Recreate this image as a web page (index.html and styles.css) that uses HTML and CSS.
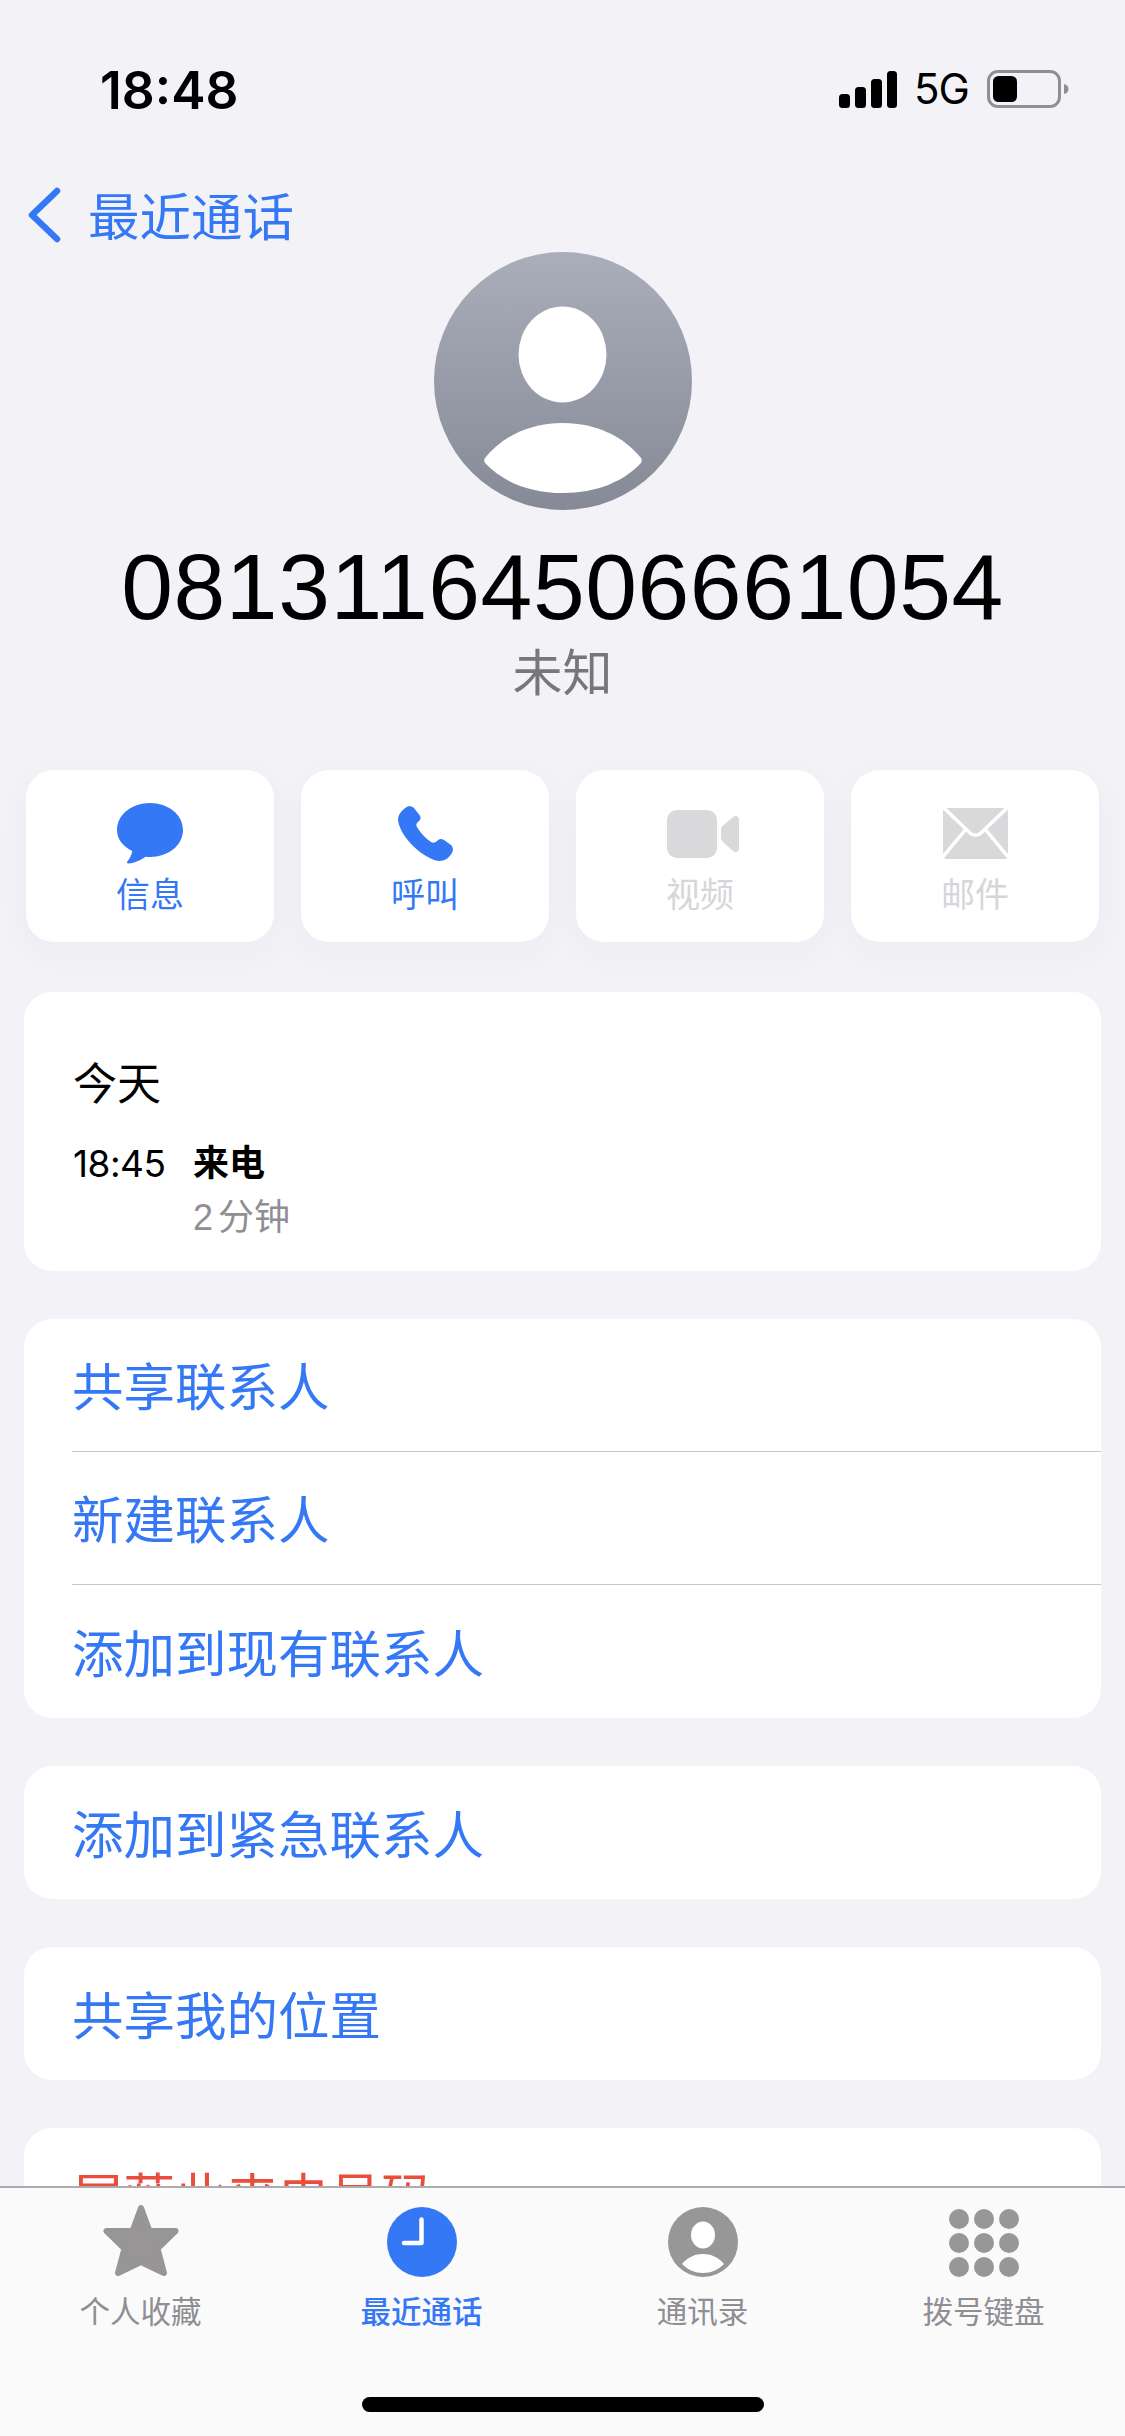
FILE: index.html
```html
<!DOCTYPE html>
<html lang="zh-CN">
<head>
<meta charset="utf-8">
<title>最近通话</title>
<link rel="stylesheet" href="styles.css">
</head>
<body>
<div class="screen">
  <header class="status">
    <span class="time">18:48</span>
    <div class="status-right">
      <svg class="signal" viewBox="0 0 58 37"><rect x="0" y="23" width="11" height="14" rx="3.5"/><rect x="16" y="16" width="11" height="21" rx="3.5"/><rect x="32" y="8" width="11" height="29" rx="3.5"/><rect x="48" y="0" width="10" height="37" rx="3.5"/></svg>
      <span class="net">5G</span>
      <svg class="battery" viewBox="0 0 82 38"><rect x="1.5" y="1.5" width="71" height="35" rx="9.5" fill="none" stroke="#8e8e93" stroke-width="3"/><rect x="6" y="6" width="24" height="26" rx="5.5" fill="#000"/><path d="M77 14c3 .8 4.500 2.500 4.500 5s-1.500 4.200-4.500 5z" fill="#8e8e93"/></svg>
    </div>
  </header>

  <nav class="back">
    <svg class="chevron" viewBox="0 0 34 56"><path d="M30 4 5 28l25 24" fill="none" stroke="#3478f6" stroke-width="6.500" stroke-linecap="round" stroke-linejoin="round"/></svg>
    <span class="back-label">最近通话</span>
  </nav>

  <section class="profile">
    <svg class="avatar" viewBox="0 0 258 258">
      <defs><linearGradient id="ag" x1="0" y1="0" x2="0" y2="1"><stop offset="0" stop-color="#aaaeba"/><stop offset="1" stop-color="#868a96"/></linearGradient></defs>
      <circle cx="129" cy="129" r="129" fill="url(#ag)"/>
      <ellipse cx="128.500" cy="102.500" rx="44" ry="48" fill="#fff"/>
      <path d="M51 206C68 185 95 171 129 171s61 14 78 35c1 2 1 3 0 5-18 19-45 30-78 30s-60-11-78-30c-1-2-1-3 0-5z" fill="#fff"/>
    </svg>
    <h1 class="number">08131164506661054</h1>
    <p class="sub">未知</p>
  </section>

  <section class="actions">
    <div class="action">
      <div class="ai"><svg width="66" height="61" viewBox="0 0 66 61"><path d="M33 0c18 0 33 11.500 33 27S51 54 33 54c-1.500 0-3 0-4.500-.2C24 57 18 60 11.500 60.500c-1.500 0-2-1-1-2.200 2-2.300 4-6 4.800-10.300C6 43.500 0 36 0 27 0 11.500 15 0 33 0z" fill="#3478f6"/></svg></div>
      <span class="lbl">信息</span>
    </div>
    <div class="action">
      <div class="ai"><svg width="55" height="55" viewBox="0 0 55 55"><path d="M8 1.500C10-.5 14 0 16 2l5.500 7c2 3 1 5-1.500 7-2 2-2 3-1 5 3 5 8 11 14 15 2 1 4 1 6-1s4-3 7-1l7 5c2 2 2.500 5 1 8-3 5-7 8-13 8C26 53 2 32 0 14 0 9 3 5 8 1.500z" fill="#3478f6"/></svg></div>
      <span class="lbl">呼叫</span>
    </div>
    <div class="action off">
      <div class="ai ai-video"><svg width="72" height="48" viewBox="0 0 72 48"><rect width="50" height="48" rx="10" fill="#d9d9dc"/><path d="M54 20c0-2 .5-3 2-4.500l10-8.500c2.500-2 6-1 6 2.500v29c0 3.500-3.500 4.500-6 2.500L56 32c-1.500-1.500-2-2.500-2-4.500z" fill="#d9d9dc"/></svg></div>
      <span class="lbl">视频</span>
    </div>
    <div class="action off">
      <div class="ai"><svg width="65" height="51" viewBox="0 0 65 51"><rect width="65" height="51" rx="3" fill="#d9d9dc"/><path d="M0 0l27 26c3 3 8 3 11 0L65 0M-1 51l24-29M66 51 42 22" transform="translate(0 -1)" fill="none" stroke="#fff" stroke-width="3.500"/></svg></div>
      <span class="lbl">邮件</span>
    </div>
  </section>

  <section class="card calls">
    <div class="day">今天</div>
    <div class="call">
      <span class="call-time">18:45</span>
      <div class="call-info">
        <span class="call-type">来电</span>
        <span class="call-len">2 分钟</span>
      </div>
    </div>
  </section>

  <section class="card list">
    <div class="row">共享联系人</div>
    <div class="row">新建联系人</div>
    <div class="row">添加到现有联系人</div>
  </section>
  <section class="card list">
    <div class="row">添加到紧急联系人</div>
  </section>
  <section class="card list">
    <div class="row">共享我的位置</div>
  </section>
  <section class="card list">
    <div class="row danger">屏蔽此来电号码</div>
  </section>

  <footer class="tabbar">
    <div class="tabs">
      <div class="tab">
        <div class="ti"><svg width="76" height="73" viewBox="0 0 76 73"><path d="M38 4 46.500 27 72.500 27 54.500 44.500 61 69 38 58 15 69 21.500 44.500 3.500 27 29.500 27z" fill="#979595" stroke="#979595" stroke-width="6" stroke-linejoin="round"/></svg></div>
        <span class="tl">个人收藏</span>
      </div>
      <div class="tab active">
        <div class="ti"><svg width="70" height="70" viewBox="0 0 70 70"><circle cx="35" cy="35" r="35" fill="#3478f6"/><path d="M34.500 12.500V36H17" fill="none" stroke="#fff" stroke-width="4.500" stroke-linecap="round" stroke-linejoin="round"/></svg></div>
        <span class="tl">最近通话</span>
      </div>
      <div class="tab">
        <div class="ti"><svg width="70" height="70" viewBox="0 0 70 70"><circle cx="35" cy="35" r="35" fill="#979797"/><ellipse cx="35" cy="28" rx="12" ry="13.500" fill="#fff"/><path d="M14 57c6-7 13-10 21-10s15 3 21 10c-6 6-13 9-21 9s-15-3-21-9z" fill="#fff"/></svg></div>
        <span class="tl">通讯录</span>
      </div>
      <div class="tab">
        <div class="ti"><svg width="70" height="68" viewBox="0 0 70 68" fill="#979797"><circle cx="10" cy="10" r="10"/><circle cx="35" cy="10" r="10"/><circle cx="60" cy="10" r="10"/><circle cx="10" cy="34" r="10"/><circle cx="35" cy="34" r="10"/><circle cx="60" cy="34" r="10"/><circle cx="10" cy="58" r="10"/><circle cx="35" cy="58" r="10"/><circle cx="60" cy="58" r="10"/></svg></div>
        <span class="tl">拨号键盘</span>
      </div>
    </div>
    <div class="home"></div>
  </footer>
</div>
</body>
</html>
```

FILE: styles.css
```css
* { box-sizing: border-box; }
html, body { margin: 0; padding: 0; }
body {
  font-family: "Liberation Sans", "Noto Sans CJK SC", sans-serif;
  background: #f2f2f7;
}
.screen {
  position: relative;
  width: 1125px;
  height: 2436px;
  overflow: hidden;
  background: #f2f2f7;
  display: flex;
  flex-direction: column;
}
.status {
  display: flex;
  justify-content: space-between;
  align-items: center;
  height: 40px;
  margin-top: 69px;
  padding: 0 56px 0 100px;
  flex: none;
}
.time { font: 600 51.5px/40px Inter, sans-serif; margin-top: 2px; color: #000; }
.status-right { display: flex; align-items: center; }
.signal { width: 58px; height: 37px; fill: #000; }
.net { font: 400 42px/40px Inter, sans-serif; width: 73px; margin-left: 17px; letter-spacing: -1px; color: #000; }
.battery { width: 82px; height: 38px; }

.back {
  display: flex;
  align-items: center;
  height: 56px;
  margin-top: 78px;
  padding-left: 27px;
  color: #3478f6;
  font-size: 51.5px;
  flex: none;
}
.chevron { width: 34px; height: 56px; margin-right: 27px; }
.back-label { line-height: 52px; margin-top: 6px; }

.profile { display: flex; flex-direction: column; align-items: center; margin-top: 9px; flex: none; }
.avatar { width: 258px; height: 258px; display: block; }
.number {
  margin: 32px 0 0;
  font-weight: 400;
  font-size: 93px;
  line-height: 90px;
  letter-spacing: .6px;
  color: #000;
}
.sub { margin: 12px 0 0; font-size: 50px; line-height: 60px; color: #77777b; }

.actions {
  display: grid;
  grid-template-columns: repeat(4, 248px);
  gap: 27px;
  margin-top: 66px;
  padding-left: 26px;
  flex: none;
}
.action {
  height: 172px;
  padding-top: 33px;
  background: #fff;
  border-radius: 28px;
  box-shadow: 0 10px 36px rgba(60, 60, 90, .035);
  display: flex;
  flex-direction: column;
  align-items: center;
  color: #3478f6;
}
.ai { height: 61px; display: flex; align-items: center; }
.ai svg { display: block; }
.ai-video { margin-left: 6px; }
.action .lbl { margin-top: 11px; font-size: 34px; line-height: 40px; }
.action.off { color: #d6d6d9; }

.card { background: #fff; border-radius: 28px; margin: 48px 24px 0; flex: none; }
.calls { height: 279px; margin-top: 50px; padding: 68px 49px 0; }
.day { font-size: 44px; line-height: 50px; color: #000; }
.call { display: flex; margin-top: 29px; }
.call-time { width: 120px; font: 400 37px/50px Inter, sans-serif; letter-spacing: -.5px; color: #000; }
.call-info { display: flex; flex-direction: column; }
.call-type { font-size: 36px; line-height: 50px; font-weight: 700; color: #000; }
.call-len { font-size: 36px; line-height: 50px; margin-top: 4px; word-spacing: -5px; color: #8e8e93; }

.list { padding-left: 48px; }
.row {
  height: 133px;
  padding-bottom: 3px;
  display: flex;
  align-items: center;
  font-size: 51.5px;
  color: #3478f6;
  border-bottom: 1px solid #c6c6c8;
}
.row:last-child { border-bottom: 0; }
.danger { color: #eb4d3d; }

.tabbar {
  position: absolute;
  left: 0;
  right: 0;
  top: 2186px;
  bottom: 0;
  background: #fafafb;
  border-top: 2px solid #acacb0;
}
.tabs { display: grid; grid-template-columns: repeat(4, 1fr); padding: 16px 1px 0 0; }
.tab { display: flex; flex-direction: column; align-items: center; color: #8e8e93; }
.tab.active { color: #3478f6; }
.ti { height: 73px; display: flex; align-items: flex-end; }
.ti svg { display: block; }
.tl { font-size: 30.5px; line-height: 40px; margin-top: 15px; }
.tab.active .tl { font-weight: 500; }
.home {
  position: absolute;
  left: 362px;
  width: 402px;
  top: 209px;
  height: 15px;
  border-radius: 8px;
  background: #000;
}
```
